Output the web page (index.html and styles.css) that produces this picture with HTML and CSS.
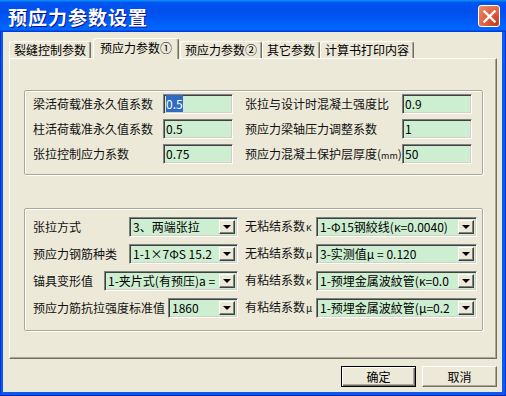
FILE: index.html
```html
<!DOCTYPE html>
<html lang="zh-CN">
<head>
    <meta charset="UTF-8">
    <title>预应力参数设置</title>
    <link rel="stylesheet" href="styles.css">
</head>
<body>
<div class="window">
    <div class="titlebar">
        <span class="title">预应力参数设置</span>
        <button class="close" title="关闭">
            <svg width="13" height="13" viewBox="0 0 13 13">
                <path d="M1.5 1.5 L11.5 11.5 M11.5 1.5 L1.5 11.5" stroke="#fff" stroke-width="2.4" stroke-linecap="square"/>
            </svg>
        </button>
    </div>
    <div class="client">
        <div class="tabs">
            <div class="tab">裂缝控制参数</div>
            <div class="tab active">预应力参数①</div>
            <div class="tab">预应力参数②</div>
            <div class="tab">其它参数</div>
            <div class="tab">计算书打印内容</div>
        </div>
        <div class="panel">
            <div class="group group-coef">
                <div class="coef-grid">
                    <span class="label">梁活荷载准永久值系数</span>
                    <div class="edit"><span class="sel">0.5</span></div>
                    <span class="label">张拉与设计时混凝土强度比</span>
                    <div class="edit">0.9</div>

                    <span class="label">柱活荷载准永久值系数</span>
                    <div class="edit">0.5</div>
                    <span class="label">预应力梁轴压力调整系数</span>
                    <div class="edit">1</div>

                    <span class="label">张拉控制应力系数</span>
                    <div class="edit">0.75</div>
                    <span class="label">预应力混凝土保护层厚度(<span class="unit">mm</span>)</span>
                    <div class="edit">50</div>
                </div>
            </div>

            <div class="group group-combo">
                <div class="combo-grid">
                    <div class="cell">
                        <span class="label">张拉方式</span>
                        <div class="combo combo-md"><span class="combo-text">3、两端张拉</span><span class="drop"></span></div>
                    </div>
                    <div class="cell">
                        <span class="label">无粘结系数<span class="greek">κ</span></span>
                        <div class="combo combo-wide"><span class="combo-text">1-Φ15钢絞线(κ=0.0040)</span><span class="drop"></span></div>
                    </div>

                    <div class="cell">
                        <span class="label">预应力钢筋种类</span>
                        <div class="combo combo-md"><span class="combo-text">1-1×7ΦS 15.2</span><span class="drop"></span></div>
                    </div>
                    <div class="cell">
                        <span class="label">无粘结系数<span class="greek">μ</span></span>
                        <div class="combo combo-wide"><span class="combo-text">3-实测值μ = 0.120</span><span class="drop"></span></div>
                    </div>

                    <div class="cell">
                        <span class="label">锚具变形值</span>
                        <div class="combo combo-lg"><span class="combo-text">1-夹片式(有预压)a =</span><span class="drop"></span></div>
                    </div>
                    <div class="cell">
                        <span class="label">有粘结系数<span class="greek">κ</span></span>
                        <div class="combo combo-wide"><span class="combo-text">1-预埋金属波紋管(κ=0.0</span><span class="drop"></span></div>
                    </div>

                    <div class="cell">
                        <span class="label">预应力筋抗拉强度标准值</span>
                        <div class="combo combo-sm"><span class="combo-text">1860</span><span class="drop"></span></div>
                    </div>
                    <div class="cell">
                        <span class="label">有粘结系数<span class="greek">μ</span></span>
                        <div class="combo combo-wide"><span class="combo-text">1-预埋金属波紋管(μ=0.2</span><span class="drop"></span></div>
                    </div>
                </div>
            </div>
        </div>
        <div class="actions">
            <button class="btn btn-default">确定</button>
            <button class="btn">取消</button>
        </div>
    </div>
</div>
</body>
</html>
```

FILE: styles.css
```css
* {
    box-sizing: border-box;
}
body {
    margin: 0;
    font-family: "Noto Sans CJK SC", "Liberation Sans", sans-serif;
    font-size: 12px;
    color: #000;
    background: #0055e5;
}
.window {
    width: 506px;
    height: 396px;
    display: flex;
    flex-direction: column;
    background: #0a5cf0;
    border: 1px solid #0831d9;
    border-top: none;
    border-bottom-color: #001ea0;
}
.titlebar {
    height: 32px;
    margin: 0 -1px;
    display: flex;
    align-items: center;
    justify-content: space-between;
    padding: 0 6px 0 8px;
    background: linear-gradient(180deg, #0997ff, #0053ee 8%, #0050ee 40%, #0066ff 88%, #0066ff 93%, #005bff 95%, #003dd7 96%, #003dd7);
}
.title {
    color: #fff;
    font-size: 19px;
    font-weight: bold;
    letter-spacing: 1px;
    text-shadow: 1px 1px #0f1089;
}
.close {
    width: 22px;
    height: 22px;
    padding: 0;
    display: flex;
    align-items: center;
    justify-content: center;
    border: 1px solid #fff;
    border-radius: 3px;
    background: radial-gradient(circle at 85% 85%, #c43b1c, #e35f3c 45%, #ec8c6c);
}
.client {
    flex: 1;
    margin: 0 3px 3px 2px;
    padding: 6px 5px 5px 6px;
    background: #ece9d8;
    display: flex;
    flex-direction: column;
}

/* tabs */
.tabs {
    height: 20px;
    display: flex;
    align-items: flex-end;
}
.tab {
    height: 17px;
    padding: 0 4px;
    line-height: 16px;
    white-space: nowrap;
    border: 1px solid;
    border-color: #fff #716f64 transparent #fff;
    border-bottom: none;
    border-radius: 3px 3px 0 0;
    box-shadow: inset -1px 0 #aca899;
    background: #ece9d8;
}
.tab.active {
    position: relative;
    height: 21px;
    margin: 0 0 -1px 2px;
    padding: 0 6px;
    line-height: 17px;
}
.tab.active + .tab {
    margin-left: 1px;
}
.panel {
    height: 301px;
    padding: 31px 13px 0 14px;
    border: 1px solid;
    border-color: #fff #716f64 #716f64 #fff;
    box-shadow: inset -1px -1px #aca899;
}

/* group boxes */
.group {
    border: 1px solid #aca899;
    box-shadow: inset 1px 1px #fff, 1px 1px #fff;
    border-radius: 2px;
}
.group-coef {
    padding: 3px 0 8px 8px;
}
.group-combo {
    margin-top: 33px;
    padding: 7px 0 12px 8px;
}
.label {
    line-height: 20px;
    white-space: nowrap;
    color: #111;
}
.unit {
    font-size: 9px;
}
.greek {
    font-size: 10px;
    margin-left: 1px;
}
.coef-grid {
    display: grid;
    grid-template-columns: 130px 82px 157px 71px;
    row-gap: 5px;
}
.edit,
.combo {
    height: 20px;
    border: 1px solid;
    border-color: #808080 #fff #fff #808080;
    box-shadow: inset 1px 1px #404040, inset -1px -1px #d4d0c8;
    background: #cdeed0;
    line-height: 16px;
    padding: 1px 2px;
    white-space: nowrap;
}
.edit {
    width: 70px;
}
.sel {
    background: #316ac5;
    color: #fff;
}

/* combo boxes */
.combo-grid {
    display: grid;
    grid-template-columns: 205px 232px;
    column-gap: 7px;
    row-gap: 6px;
}
.cell {
    display: flex;
    align-items: center;
    justify-content: space-between;
}
.combo {
    display: flex;
    align-items: center;
    padding: 1px 2px 1px 3px;
}
.combo-text {
    flex: 1;
    overflow-x: clip;
    line-height: 16px;
}
.combo-sm {
    width: 70px;
}
.combo-md {
    width: 109px;
}
.combo-lg {
    width: 134px;
}
.combo-wide {
    width: 161px;
}
.drop {
    width: 16px;
    height: 14px;
    flex: none;
    position: relative;
    border: 1px solid;
    border-color: #fff #404040 #404040 #fff;
    box-shadow: inset -1px -1px #808080;
    background: #ece9d8;
}
.drop::after {
    content: "";
    position: absolute;
    left: 3px;
    top: 4px;
    border-left: 4px solid transparent;
    border-right: 4px solid transparent;
    border-top: 4px solid #000;
}

/* dialog buttons */
.actions {
    display: flex;
    justify-content: flex-end;
    gap: 6px;
    margin-top: 7px;
}
.btn {
    width: 75px;
    height: 21px;
    padding: 0;
    font-family: inherit;
    font-size: 12px;
    color: #000;
    background: #ece9d8;
    border: 1px solid;
    border-color: #fff #716f64 #716f64 #fff;
    box-shadow: inset -1px -1px #aca899;
}
.btn-default {
    border-color: #000;
    box-shadow: inset 1px 1px #fff, inset -1px -1px #716f64, inset -2px -2px #aca899;
}
```
